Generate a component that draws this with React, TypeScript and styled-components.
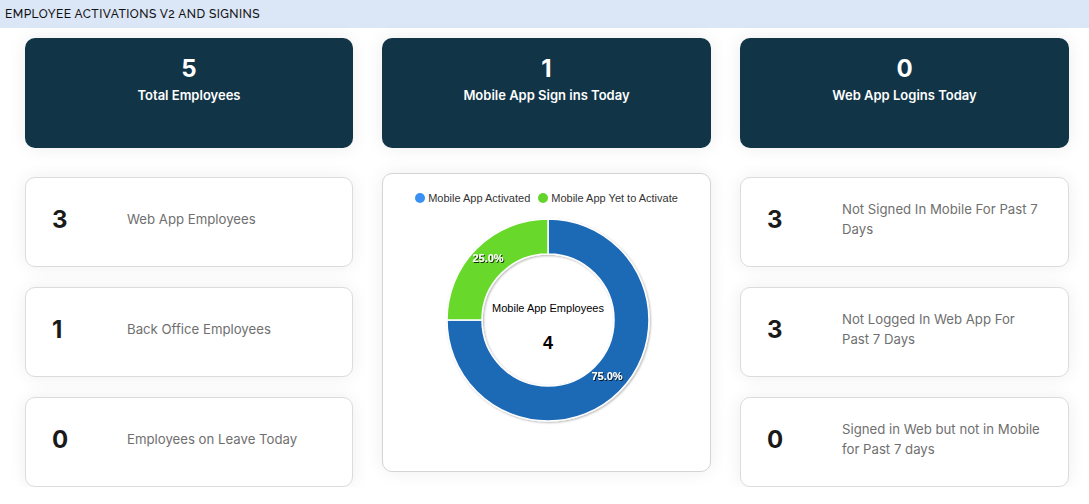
import styled, { createGlobalStyle } from "styled-components";

const GlobalStyle = createGlobalStyle`
  body {
    margin: 0;
    background: #ffffff;
    font-family: Inter, "Liberation Sans", Arial, sans-serif;
  }
`;

const TitleBar = styled.div`
  height: 28px;
  background: #dbe6f6;
  display: flex;
  align-items: center;
  padding-left: 5px;
  font-family: Raleway, Inter, "Liberation Sans", sans-serif;
  font-size: 12px;
  font-weight: 500;
  color: #111;
  letter-spacing: 0.45px;
`;

const Board = styled.div`
  display: grid;
  grid-template-columns: 328px 329px 329px;
  column-gap: 29px;
  padding: 10px 0 0 25px;
`;

const Column = styled.div`
  display: flex;
  flex-direction: column;
  gap: 25px;
`;

const Stack = styled.div`
  display: flex;
  flex-direction: column;
  gap: 20px;
  margin-top: 4px;
`;

const HeroCard = styled.div`
  height: 110px;
  box-sizing: border-box;
  background: #113447;
  border-radius: 10px;
  color: #fff;
  display: flex;
  flex-direction: column;
  align-items: center;
  padding-top: 17px;
  box-shadow: 0 0 18px rgba(0, 0, 0, 0.08);
`;

const HeroNumber = styled.div`
  font-size: 24px;
  font-weight: 700;
  line-height: 28px;
`;

const HeroLabel = styled.div`
  font-size: 13px;
  font-weight: 600;
  margin-top: 4px;
`;

const StatCard = styled.div`
  height: 90px;
  box-sizing: border-box;
  background: #fff;
  border: 1px solid #dcdcdc;
  border-radius: 10px;
  display: flex;
  align-items: center;
  padding: 0 24px 5px 26px;
  box-shadow: 0 0 18px rgba(0, 0, 0, 0.07);
`;

const StatNumber = styled.div`
  width: 75px;
  flex-shrink: 0;
  font-size: 24px;
  font-weight: 700;
  color: #1a1a1a;
`;

const StatLabel = styled.div`
  font-size: 13.2px;
  line-height: 19.5px;
  color: #6f6f6f;
  max-width: 210px;
`;

const ChartCard = styled.div`
  height: 299px;
  box-sizing: border-box;
  background: #fff;
  border: 1px solid #d4d4d4;
  border-radius: 10px;
  box-shadow: 0 0 18px rgba(0, 0, 0, 0.07);
  padding-top: 18px;
  font-family: "Liberation Sans", Arial, sans-serif;
`;

const Legend = styled.div`
  display: flex;
  justify-content: center;
  gap: 8px;
  font-size: 11px;
  color: #333;
`;

const LegendItem = styled.div`
  display: flex;
  align-items: center;
  gap: 3px;
`;

const Dot = styled.span<{ $color: string }>`
  width: 10px;
  height: 10px;
  border-radius: 50%;
  background: ${(p) => p.$color};
`;

function arc(cx: number, cy: number, R: number, r: number, a0: number, a1: number) {
  const pt = (rad: number, a: number) => {
    const t = ((a - 90) * Math.PI) / 180;
    return `${cx + rad * Math.cos(t)} ${cy + rad * Math.sin(t)}`;
  };
  const large = a1 - a0 > 180 ? 1 : 0;
  return `M ${pt(R, a0)} A ${R} ${R} 0 ${large} 1 ${pt(R, a1)} L ${pt(r, a1)} A ${r} ${r} 0 ${large} 0 ${pt(r, a0)} Z`;
}

function Donut() {
  const cx = 165;
  const cy = 116;
  return (
    <svg width="327" height="255" viewBox="0 0 327 255">
      <defs>
        <filter id="sh" x="-10%" y="-10%" width="120%" height="120%">
          <feDropShadow dx="1" dy="1" stdDeviation="1" floodColor="#000" floodOpacity="0.3" />
        </filter>
        <filter id="ts" x="-20%" y="-40%" width="140%" height="180%">
          <feDropShadow dx="1" dy="1" stdDeviation="0.6" floodColor="#000" floodOpacity="0.8" />
        </filter>
      </defs>
      <g filter="url(#sh)" stroke="#fff" strokeWidth="1.5">
        <path d={arc(cx, cy, 101, 66, 0, 270)} fill="#1e6ab6" />
        <path d={arc(cx, cy, 101, 66, 270, 360)} fill="#67d92b" />
      </g>
      <g fill="#fff" fontSize="11" fontWeight="700" filter="url(#ts)" textAnchor="middle">
        <text x={105} y={58}>25.0%</text>
        <text x={224} y={176}>75.0%</text>
      </g>
      <text x={cx} y={108} textAnchor="middle" fontSize="11" fill="#000">
        Mobile App Employees
      </text>
      <text x={cx} y={145} textAnchor="middle" fontSize="18" fontWeight="700" fill="#000">
        4
      </text>
    </svg>
  );
}

const leftStats = [
  { n: 3, label: "Web App Employees" },
  { n: 1, label: "Back Office Employees" },
  { n: 0, label: "Employees on Leave Today" },
];

const rightStats = [
  { n: 3, label: "Not Signed In Mobile For Past 7 Days" },
  { n: 3, label: "Not Logged In Web App For Past 7 Days" },
  { n: 0, label: "Signed in Web but not in Mobile for Past 7 days" },
];

function App() {
  return (
    <>
      <GlobalStyle />
      <TitleBar>EMPLOYEE ACTIVATIONS V2 AND SIGNINS</TitleBar>
      <Board>
        <Column>
          <HeroCard>
            <HeroNumber>5</HeroNumber>
            <HeroLabel>Total Employees</HeroLabel>
          </HeroCard>
          <Stack>
            {leftStats.map((s) => (
              <StatCard key={s.label}>
                <StatNumber>{s.n}</StatNumber>
                <StatLabel>{s.label}</StatLabel>
              </StatCard>
            ))}
          </Stack>
        </Column>
        <Column>
          <HeroCard>
            <HeroNumber>1</HeroNumber>
            <HeroLabel>Mobile App Sign ins Today</HeroLabel>
          </HeroCard>
          <ChartCard>
            <Legend>
              <LegendItem>
                <Dot $color="#3a90f3" />
                Mobile App Activated
              </LegendItem>
              <LegendItem>
                <Dot $color="#63d52a" />
                Mobile App Yet to Activate
              </LegendItem>
            </Legend>
            <Donut />
          </ChartCard>
        </Column>
        <Column>
          <HeroCard>
            <HeroNumber>0</HeroNumber>
            <HeroLabel>Web App Logins Today</HeroLabel>
          </HeroCard>
          <Stack>
            {rightStats.map((s) => (
              <StatCard key={s.label}>
                <StatNumber>{s.n}</StatNumber>
                <StatLabel>{s.label}</StatLabel>
              </StatCard>
            ))}
          </Stack>
        </Column>
      </Board>
    </>
  );
}

export default App;
